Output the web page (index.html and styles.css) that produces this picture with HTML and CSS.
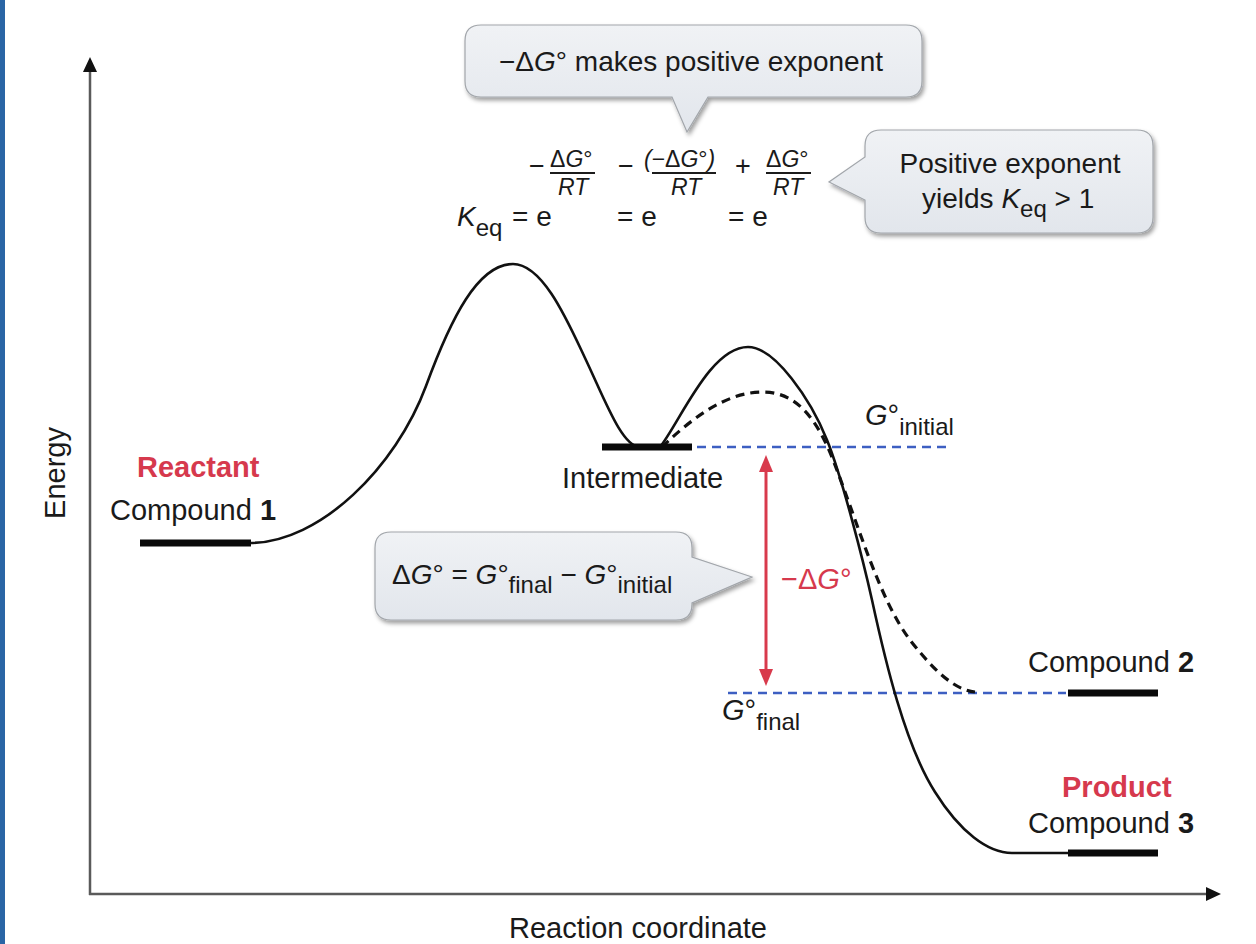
FILE: index.html
```html
<!DOCTYPE html>
<html lang="en">
<head>
<meta charset="utf-8">
<title>Reaction coordinate diagram</title>
<link rel="stylesheet" href="styles.css">
</head>
<body>
<div class="page">
  <div class="edge"></div>
  <figure class="figure">
    <svg class="diagram" width="1251" height="944" viewBox="5 0 1251 944" xmlns="http://www.w3.org/2000/svg">
      <defs>
        <linearGradient id="bubbleFill" x1="0" y1="0" x2="0" y2="1">
          <stop offset="0" stop-color="#f0f2f5"/>
          <stop offset="1" stop-color="#e2e6ec"/>
        </linearGradient>
        <filter id="bubbleShadow" x="-10%" y="-20%" width="125%" height="150%">
          <feDropShadow dx="2" dy="3" stdDeviation="2" flood-color="#000" flood-opacity="0.38"/>
        </filter>
      </defs>

      <!-- axes -->
      <line class="axis" x1="90" y1="70" x2="90" y2="895"/>
      <polygon class="axis-head" points="90,57 83,72 97,72"/>
      <line class="axis" x1="89" y1="894" x2="1208" y2="894"/>
      <polygon class="axis-head" points="1221,894 1206,887 1206,901"/>

      <!-- reference levels -->
      <line class="level" x1="697" y1="447" x2="948" y2="447"/>
      <line class="level" x1="728" y1="693" x2="1066" y2="693"/>

      <!-- energy curves -->
      <path class="curve" d="M250,543 C320,543 396,467 426,386 C451,318 478,264 513,264 C543,264 568,322 585,358 C605,400 622,447 640,447 L660,447 C680,422 710,347 748,347 C775,347 811,400 827,440 C842,477 864,564 872,600 C885,660 905,745 935,792 C960,832 988,853 1012,853 L1068,853"/>
      <path class="curve dashed" d="M662,447 C690,420 725,392 763,392 C800,392 820,425 835,465 C860,530 880,600 910,640 C935,672 955,690 975,692"/>

      <!-- species bars -->
      <line class="bar" x1="140" y1="543" x2="251" y2="543"/>
      <line class="bar" x1="602" y1="447" x2="692" y2="447"/>
      <line class="bar" x1="1068" y1="693" x2="1158" y2="693"/>
      <line class="bar" x1="1068" y1="853" x2="1158" y2="853"/>

      <!-- delta G arrow -->
      <line class="arrow" x1="766" y1="468" x2="766" y2="672"/>
      <polygon class="arrow-head" points="766,455 759,472 773,472"/>
      <polygon class="arrow-head" points="766,686 759,669 773,669"/>

      <!-- callouts -->
      <path class="bubble" d="M481,25 H906 Q922,25 922,41 V81 Q922,97 906,97 H708 L687,132 L672,97 H481 Q465,97 465,81 V41 Q465,25 481,25 Z"/>
      <path class="bubble" d="M881,130 H1137 Q1153,130 1153,146 V217 Q1153,233 1137,233 H881 Q865,233 865,217 V200 L829,182 L865,157 V146 Q865,130 881,130 Z"/>
      <path class="bubble" d="M391,532 H676 Q692,532 692,548 V557 L752,577 L692,603 V604 Q692,620 676,620 H391 Q375,620 375,604 V548 Q375,532 391,532 Z"/>

      <text class="t bub" x="691" y="71" text-anchor="middle">−Δ<tspan class="i">G</tspan>° makes positive exponent</text>

      <text class="t bub" x="1010" y="173" text-anchor="middle">Positive exponent</text>
      <text class="t bub" x="922" y="208">yields <tspan class="i">K</tspan><tspan class="sub" dy="9">eq</tspan><tspan dy="-9"> &gt; 1</tspan></text>

      <text class="t bub" x="392" y="584">Δ<tspan class="i">G</tspan>° = <tspan class="i">G</tspan>°<tspan class="sub" dy="9">final</tspan><tspan dy="-9"> − </tspan><tspan class="i">G</tspan>°<tspan class="sub" dy="9">initial</tspan></text>

      <!-- equation -->
      <text class="t eqm" x="457" y="226"><tspan class="i">K</tspan><tspan class="sub" dy="10">eq</tspan></text>
      <text class="t eqm" x="512" y="226">= e</text>
      <text class="t eqm" x="617" y="226">= e</text>
      <text class="t eqm" x="728" y="226">= e</text>

      <text class="t eqop" x="529" y="175">−</text>
      <text class="t eqf" x="550" y="167">Δ<tspan class="i">G</tspan>°</text>
      <line class="frac" x1="550" y1="173" x2="595" y2="173"/>
      <text class="t eqf i" x="558" y="195">RT</text>

      <text class="t eqop" x="618" y="175">−</text>
      <text class="t eqf" x="644" y="167"><tspan class="i">(</tspan>−Δ<tspan class="i">G</tspan>°<tspan class="i">)</tspan></text>
      <line class="frac" x1="652" y1="173" x2="716" y2="173"/>
      <text class="t eqf i" x="671" y="195">RT</text>

      <text class="t eqop" x="735" y="175">+</text>
      <text class="t eqf" x="766" y="167">Δ<tspan class="i">G</tspan>°</text>
      <line class="frac" x1="766" y1="173" x2="811" y2="173"/>
      <text class="t eqf i" x="773" y="195">RT</text>

      <!-- labels -->
      <text class="t lbl" text-anchor="middle" transform="translate(65,473) rotate(-90)">Energy</text>
      <text class="t lbl" x="509" y="938">Reaction coordinate</text>

      <text class="t lbl red" x="137" y="477">Reactant</text>
      <text class="t lbl" x="110" y="520">Compound <tspan class="b">1</tspan></text>

      <text class="t lbl" x="562" y="488">Intermediate</text>

      <text class="t lbl" x="865" y="425"><tspan class="i">G</tspan>°<tspan class="sub" dy="10">initial</tspan></text>
      <text class="t lbl" x="722" y="720"><tspan class="i">G</tspan>°<tspan class="sub" dy="10">final</tspan></text>

      <text class="t lbl redthin" x="781" y="589">−Δ<tspan class="i">G</tspan>°</text>

      <text class="t lbl" x="1028" y="672">Compound <tspan class="b">2</tspan></text>
      <text class="t lbl red" x="1062" y="797">Product</text>
      <text class="t lbl" x="1028" y="833">Compound <tspan class="b">3</tspan></text>
    </svg>
  </figure>
</div>
</body>
</html>
```

FILE: styles.css
```css
html, body {
  margin: 0;
  padding: 0;
  background: #ffffff;
}

.page {
  display: flex;
  width: 1256px;
  height: 944px;
  overflow: hidden;
  background: #ffffff;
}

.edge {
  flex: 0 0 5px;
  background: #2a65a5;
}

.figure {
  margin: 0;
  flex: 1 1 auto;
}

.diagram {
  display: block;
}

.axis {
  stroke: #5a5a5a;
  stroke-width: 2.5;
}

.axis-head {
  fill: #111111;
}

.level {
  stroke: #3d5fc2;
  stroke-width: 2.5;
  stroke-dasharray: 9 6;
}

.curve {
  fill: none;
  stroke: #111111;
  stroke-width: 2.6;
}

.curve.dashed {
  stroke-width: 3.2;
  stroke-dasharray: 9 6;
}

.bar {
  stroke: #0a0a0a;
  stroke-width: 7;
}

.arrow {
  stroke: #d83a4c;
  stroke-width: 3;
}

.arrow-head {
  fill: #d83a4c;
}

.bubble {
  fill: url(#bubbleFill);
  stroke: #a2a6ab;
  stroke-width: 1.2;
  filter: url(#bubbleShadow);
}

.frac {
  stroke: #1c1c1c;
  stroke-width: 1.8;
}

.t {
  font-family: "Liberation Sans", Arial, Helvetica, sans-serif;
  fill: #1a1a1a;
}

.lbl {
  font-size: 29px;
}

.bub {
  font-size: 28px;
}

.eqm {
  font-size: 28px;
}

.eqf {
  font-size: 23px;
}

.eqop {
  font-size: 27px;
}

.sub {
  font-size: 24px;
  font-style: normal;
}

.i {
  font-style: italic;
}

.b {
  font-weight: bold;
}

.red {
  fill: #d6394d;
  font-weight: bold;
}

.redthin {
  fill: #d6394d;
}
```
